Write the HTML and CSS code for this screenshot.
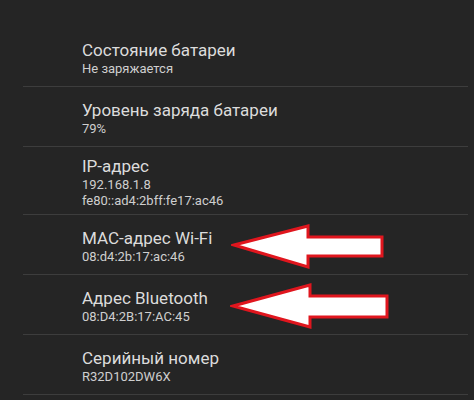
FILE: index.html
```html
<!DOCTYPE html>
<html lang="ru">
<head>
<meta charset="utf-8">
<link rel="stylesheet" href="styles.css">
</head>
<body>
<div class="screen">
  <ul class="list">
    <li class="item">
      <div class="title">Состояние батареи</div>
      <div class="sub">Не заряжается</div>
    </li>
    <li class="item">
      <div class="title">Уровень заряда батареи</div>
      <div class="sub">79%</div>
    </li>
    <li class="item">
      <div class="title">IP-адрес</div>
      <div class="sub">192.168.1.8</div>
      <div class="sub">fe80::ad4:2bff:fe17:ac46</div>
    </li>
    <li class="item">
      <div class="title">MAC-адрес Wi-Fi</div>
      <div class="sub">08:d4:2b:17:ac:46</div>
      <svg class="arrow arrow-wifi" width="160" height="48" viewBox="0 0 160 48">
        <polygon points="3,21 77,2 77,13 151,13 151,32 77,32 77,43" fill="#ffffff" stroke="#e0161e" stroke-width="3" stroke-linejoin="miter"/>
      </svg>
    </li>
    <li class="item">
      <div class="title">Адрес Bluetooth</div>
      <div class="sub">08:D4:2B:17:AC:45</div>
      <svg class="arrow arrow-bt" width="160" height="48" viewBox="0 0 160 48">
        <polygon points="3,23 80,2 80,13 157,13 157,34 80,34 80,44" fill="#ffffff" stroke="#e0161e" stroke-width="3" stroke-linejoin="miter"/>
      </svg>
    </li>
    <li class="item">
      <div class="title">Серийный номер</div>
      <div class="sub">R32D102DW6X</div>
    </li>
  </ul>
</div>
</body>
</html>
```

FILE: styles.css
```css
html, body {
  margin: 0;
  padding: 0;
  background: #252525;
}
.screen {
  width: 474px;
  height: 400px;
  overflow: hidden;
  background: #252525;
  font-family: Roboto, "Noto Sans", sans-serif;
}
.list {
  list-style: none;
  margin: 0;
  padding: 27px 6px 0 23px;
}
.item {
  position: relative;
  box-sizing: border-box;
  min-height: 60px;
  padding: 8px 0 5px 59px;
  border-bottom: 1px solid #3d3d3d;
  display: flex;
  flex-direction: column;
  justify-content: center;
}
.title {
  font-size: 17px;
  line-height: 22px;
  color: #dcdcdc;
}
.sub {
  font-size: 13px;
  line-height: 16px;
  color: #cfcfcf;
}
.arrow {
  position: absolute;
}
.arrow-wifi {
  left: 208px;
  top: 9px;
}
.arrow-bt {
  left: 207px;
  top: 8px;
}
```
